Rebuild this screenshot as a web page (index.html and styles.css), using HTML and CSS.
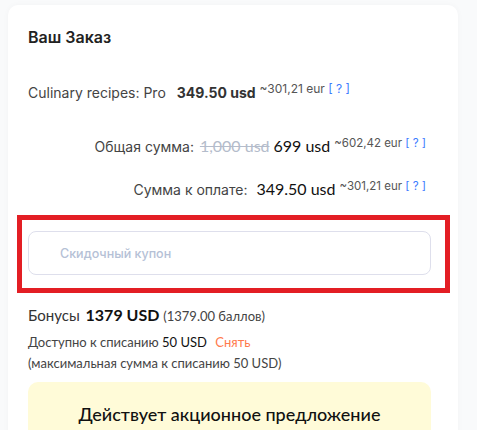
FILE: index.html
```html
<!DOCTYPE html>
<html>
<head>
  <link rel="stylesheet" href="styles.css">
</head>
<body>

  <div class="order-card">
    <h3 class="order-title">Ваш Заказ</h3>

    <div class="order-line">
      <span class="product-name">Culinary recipes: Pro</span>
      <span class="product-price">349.50 usd</span>
      <sup class="eur">~301,21 eur <a href="#" class="help">[ ? ]</a></sup>
    </div>

    <div class="total-line total-sum">
      <span class="total-label">Общая сумма:</span>
      <span class="old-price">1,000 usd</span>
      <span class="new-price">699 usd</span>
      <sup class="eur">~602,42 eur <a href="#" class="help">[ ? ]</a></sup>
    </div>

    <div class="total-line to-pay">
      <span class="total-label">Сумма к оплате:</span>
      <span class="new-price">349.50 usd</span>
      <sup class="eur">~301,21 eur <a href="#" class="help">[ ? ]</a></sup>
    </div>

    <div class="coupon-box">
      <input type="text" class="coupon-input" placeholder="Скидочный купон">
    </div>

    <div class="bonus-line">
      Бонусы <strong>1379 USD</strong> <span class="bonus-points">(1379.00 баллов)</span>
    </div>
    <div class="bonus-small">
      Доступно к списанию <strong>50 USD</strong> <a href="#" class="remove-link">Снять</a>
    </div>
    <div class="bonus-small bonus-max">
      (максимальная сумма к списанию 50 USD)
    </div>

    <div class="promo-box">
      Действует акционное предложение
    </div>
  </div>

</body>
</html>
```

FILE: styles.css
```css
body {
  margin: 0;
  background-color: #f9fafb;
  font-family: Inter, "Noto Sans", sans-serif;
  overflow: hidden;
}
.order-card {
  margin: 5px 0 0 8px;
  width: 403px;
  height: 600px;
  padding: 20px 27px 0 20px;
  background-color: #fff;
  border-radius: 10px;
  box-shadow: 0 0 6px rgba(0, 0, 0, 0.03);
}
.order-title {
  margin: 0;
  font-size: 16px;
  line-height: 24px;
  font-weight: 600;
  color: #222;
}
.order-line {
  margin-top: 32px;
  line-height: 24px;
  font-size: 14px;
  color: #444;
}
.product-price {
  margin-left: 7px;
  font-size: 14px;
  font-weight: 700;
  color: #333;
}
.eur {
  font-size: 12px;
  color: #555;
  vertical-align: 5px;
  line-height: 0;
}
.help {
  color: #3d7cff;
  text-decoration: none;
}
.total-line {
  text-align: right;
  padding-right: 5px;
  line-height: 24px;
  font-size: 14px;
  color: #444;
}
.total-line .eur {
  font-size: 11.5px;
}
.total-line .total-label {
  margin-right: 2px;
}
.total-sum {
  margin-top: 29px;
}
.to-pay {
  margin-top: 18px;
}
.to-pay .total-label {
  margin-right: 5px;
}
.old-price {
  font-family: Lato, sans-serif;
  font-size: 16px;
  color: #b4bccb;
  text-decoration: line-through;
}
.new-price {
  font-family: Lato, sans-serif;
  font-size: 16px;
  color: #111;
}
.coupon-box {
  margin: 13px -19px 0 -11px;
  padding: 11px 14px 13px 6px;
  border: 5px solid #e31e24;
}
.coupon-input {
  display: block;
  box-sizing: border-box;
  width: 100%;
  height: 44px;
  padding: 0 0 0 31px;
  border: 1px solid #dedfec;
  border-radius: 8px;
  font-family: Inter, sans-serif;
  font-size: 12.5px;
  font-weight: 500;
  outline: none;
}
.coupon-input::placeholder {
  color: #b5c1d6;
}
.bonus-line {
  margin-top: 11px;
  font-family: Lato, sans-serif;
  font-size: 15px;
  line-height: 22px;
  color: #333;
}
.bonus-line strong {
  margin-left: 2px;
  font-size: 16px;
  color: #111;
}
.bonus-points {
  font-size: 13px;
  color: #444;
}
.bonus-small {
  margin-top: 5px;
  font-family: Lato, sans-serif;
  font-size: 13px;
  line-height: 20px;
  color: #444;
}
.bonus-small strong {
  font-weight: 400;
  color: #111;
  margin-right: 5px;
}
.bonus-max {
  margin-top: 1px;
}
.remove-link {
  color: #ff7a4d;
  text-decoration: none;
}
.promo-box {
  margin-top: 9px;
  padding: 19px 0 30px;
  background-color: #fffbd8;
  border-radius: 10px;
  text-align: center;
  font-family: Lato, sans-serif;
  font-size: 18px;
  line-height: 26px;
  font-weight: 500;
  color: #111;
}
```
